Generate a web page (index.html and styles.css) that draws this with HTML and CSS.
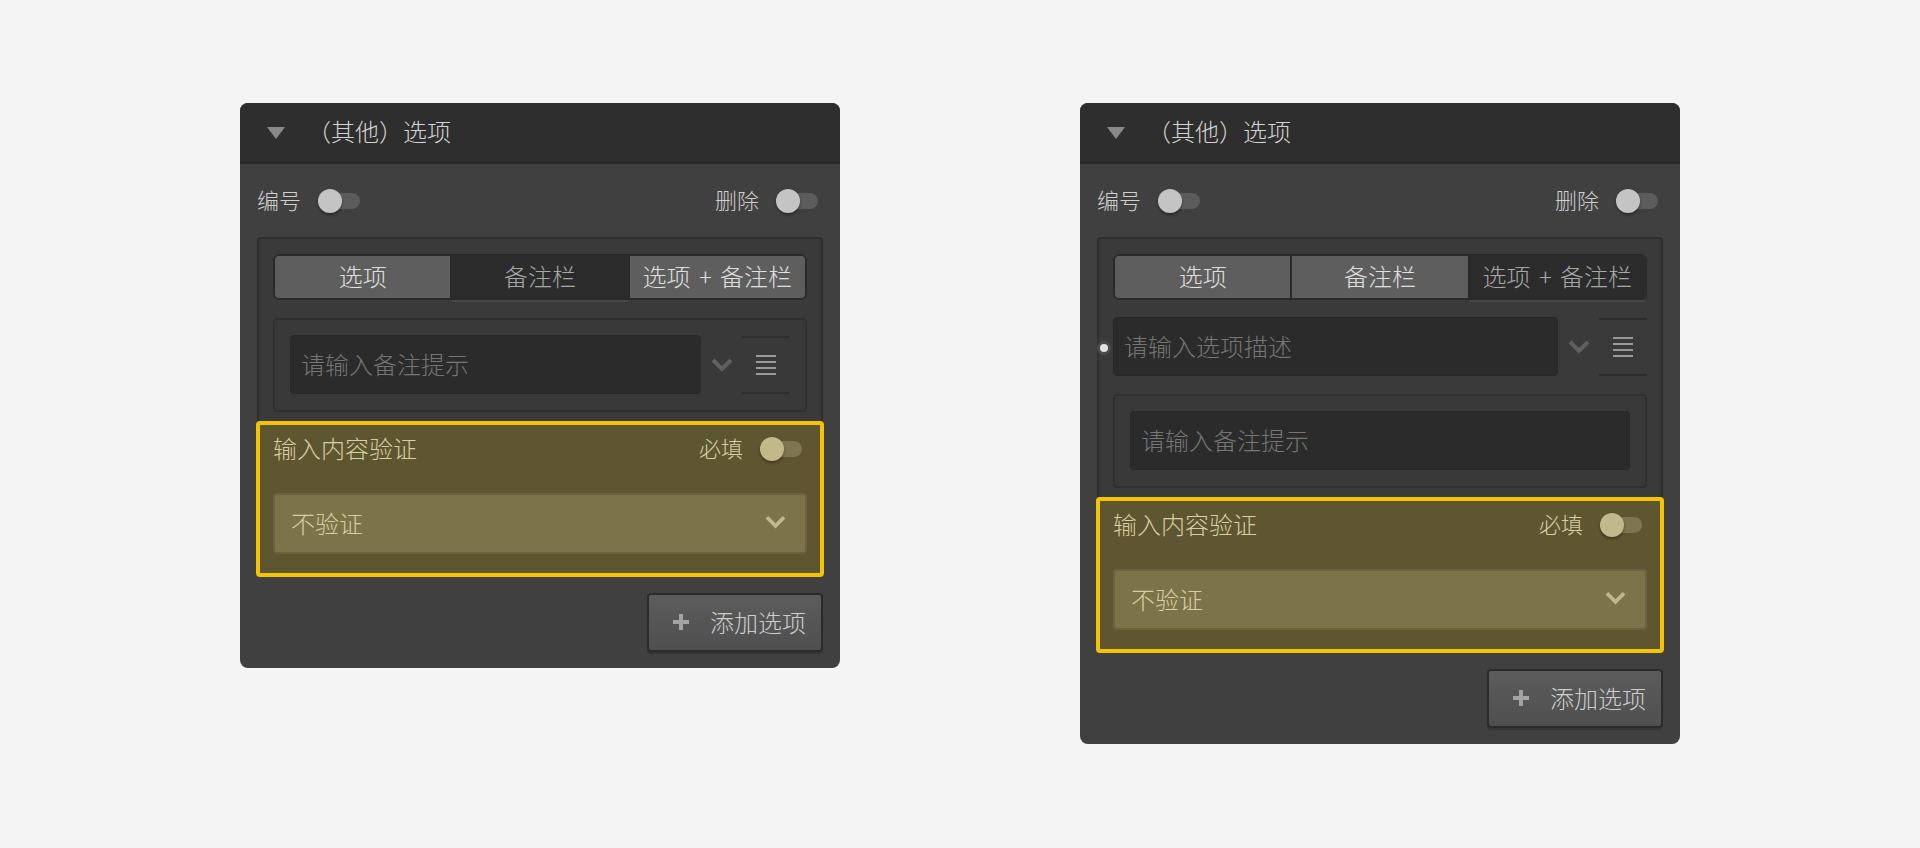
FILE: index.html
```html
<!DOCTYPE html>
<html lang="zh-CN">
<head>
  <meta charset="UTF-8" />
  <meta name="viewport" content="width=device-width, initial-scale=1" />
  <title>（其他）选项</title>
  <link rel="stylesheet" href="styles.css">
</head>
<body>

<div class="page">

  <!-- panel 1: 备注栏 mode -->
  <div class="panel">
    <div class="panel-head">
      <span class="caret"></span>
      <span class="panel-title">（其他）选项</span>
    </div>
    <div class="panel-body">
      <div class="switch-row">
        <label class="switch-label"><span class="label-text">编号</span><span class="toggle"><span class="knob"></span></span></label>
        <label class="switch-label"><span class="label-text">删除</span><span class="toggle"><span class="knob"></span></span></label>
      </div>

      <div class="section">
        <div class="segmented">
          <div class="seg on">选项</div>
          <div class="seg off">备注栏</div>
          <div class="seg on">选项 + 备注栏</div>
        </div>

        <div class="sub-box">
          <div class="field-row">
            <input class="field" placeholder="请输入备注提示" />
            <svg class="chevron" width="22" height="14" viewBox="0 0 22 14"><path d="M2 2 L11 11 L20 2" fill="none" stroke="#606060" stroke-width="4"/></svg>
            <div class="menu-box">
              <span class="menu-icon"><i></i><i></i><i></i><i></i></span>
            </div>
          </div>
        </div>

        <div class="validate">
          <div class="validate-head">
            <span class="validate-title">输入内容验证</span>
            <label class="switch-label required"><span class="label-text">必填</span><span class="toggle"><span class="knob"></span></span></label>
          </div>
          <div class="select">
            <span>不验证</span>
            <svg class="chevron" width="21" height="14" viewBox="0 0 22 14"><path d="M2 2 L11 11 L20 2" fill="none" stroke="#c0b78b" stroke-width="4"/></svg>
          </div>
        </div>
      </div>

      <div class="actions">
        <button class="add-btn">
          <svg width="16" height="16" viewBox="0 0 16 16"><path d="M8 0 V16 M0 8 H16" stroke="#a3a3a3" stroke-width="4"/></svg>
          <span>添加选项</span>
        </button>
      </div>
    </div>
  </div>

  <!-- panel 2: 选项 + 备注栏 mode -->
  <div class="panel">
    <div class="panel-head">
      <span class="caret"></span>
      <span class="panel-title">（其他）选项</span>
    </div>
    <div class="panel-body">
      <div class="switch-row">
        <label class="switch-label"><span class="label-text">编号</span><span class="toggle"><span class="knob"></span></span></label>
        <label class="switch-label"><span class="label-text">删除</span><span class="toggle"><span class="knob"></span></span></label>
      </div>

      <div class="section">
        <div class="segmented">
          <div class="seg on">选项</div>
          <div class="seg on">备注栏</div>
          <div class="seg off">选项 + 备注栏</div>
        </div>

        <div class="field-row top-row">
          <span class="dot"></span>
          <input class="field" placeholder="请输入选项描述" />
          <svg class="chevron" width="22" height="14" viewBox="0 0 22 14"><path d="M2 2 L11 11 L20 2" fill="none" stroke="#606060" stroke-width="4"/></svg>
          <div class="menu-box">
            <span class="menu-icon"><i></i><i></i><i></i><i></i></span>
          </div>
        </div>

        <div class="sub-box">
          <input class="field" placeholder="请输入备注提示" />
        </div>

        <div class="validate">
          <div class="validate-head">
            <span class="validate-title">输入内容验证</span>
            <label class="switch-label required"><span class="label-text">必填</span><span class="toggle"><span class="knob"></span></span></label>
          </div>
          <div class="select">
            <span>不验证</span>
            <svg class="chevron" width="21" height="14" viewBox="0 0 22 14"><path d="M2 2 L11 11 L20 2" fill="none" stroke="#c0b78b" stroke-width="4"/></svg>
          </div>
        </div>
      </div>

      <div class="actions">
        <button class="add-btn">
          <svg width="16" height="16" viewBox="0 0 16 16"><path d="M8 0 V16 M0 8 H16" stroke="#a3a3a3" stroke-width="4"/></svg>
          <span>添加选项</span>
        </button>
      </div>
    </div>
  </div>

</div>

</body>
</html>
```

FILE: styles.css
```css
* {
  box-sizing: border-box;
}

body {
  margin: 0;
  background: #f4f4f4;
  font-family: "Noto Sans CJK SC", "Noto Sans", sans-serif;
  font-weight: 300;
  color: #d0d0d0;
}

.page {
  display: flex;
  align-items: flex-start;
  gap: 240px;
  padding: 103px 0 0 240px;
}

.panel {
  width: 600px;
  background: #404040;
  border-radius: 8px;
}

.panel-head {
  display: flex;
  align-items: center;
  height: 61px;
  padding-left: 27px;
  background: #2e2e2e;
  border-bottom: 2px solid #262626;
  border-radius: 8px 8px 0 0;
}

.caret {
  width: 0;
  height: 0;
  border-left: 9.5px solid transparent;
  border-right: 9.5px solid transparent;
  border-top: 12px solid #8a8a8a;
  margin-right: 22px;
}

.panel-title {
  font-size: 24px;
  line-height: 30px;
  padding-bottom: 4px;
  color: #d4d4d4;
}

.panel-body {
  padding: 0 17px 16px;
}

.switch-row {
  display: flex;
  justify-content: space-between;
  align-items: center;
  height: 73px;
}

.switch-label {
  display: flex;
  align-items: center;
  font-size: 22px;
  line-height: 28px;
  color: #cfcfcf;
}

.label-text {
  padding-bottom: 4px;
}

.toggle {
  position: relative;
  display: inline-block;
  width: 42px;
  height: 16px;
  margin: 0 5px 0 17px;
  background: #5c5c5c;
  border-radius: 8px;
}

.knob {
  position: absolute;
  left: 0;
  top: -4px;
  width: 24px;
  height: 24px;
  border-radius: 50%;
  background: #c4c4c4;
  box-shadow: 0 2px 3px rgba(0, 0, 0, 0.35);
}

/* outer box */
.section {
  background: #3a3a3a;
  border: 2px solid #2f2f2f;
  border-radius: 4px;
  padding: 15px 14px 0;
}

.segmented {
  display: grid;
  grid-template-columns: 1fr 1fr 1fr;
  gap: 2px;
  height: 46px;
  background: #2a2a2a;
  border: 2px solid #2a2a2a;
  border-radius: 6px;
}

.seg {
  position: relative;
  display: flex;
  align-items: center;
  justify-content: center;
  padding-bottom: 4px;
  font-size: 24px;
  word-spacing: 3px;
  white-space: nowrap;
}

.seg.on {
  background: #5e5e5e;
  color: #e0e0e0;
}

.seg.on:first-child {
  border-radius: 4px 0 0 4px;
}

.seg.on:last-child {
  border-radius: 0 4px 4px 0;
}

.seg.off {
  background: #2c2c2c;
  color: #a8a8a8;
}

.seg.off::after {
  content: "";
  position: absolute;
  left: 0;
  right: 0;
  bottom: -4px;
  height: 2px;
  background: #474747;
}

.sub-box {
  margin-top: 18px;
  background: #393939;
  border: 2px solid #2f2f2f;
  border-radius: 4px;
  padding: 15px 15px 16px;
}

.field-row {
  position: relative;
  display: flex;
  align-items: center;
}

.top-row {
  margin-top: 17px;
}

.field {
  flex: 1;
  display: block;
  width: 100%;
  height: 59px;
  padding: 0 10px 3px;
  background: #2b2b2b;
  border: 1px solid #282828;
  border-radius: 4px;
  font-family: inherit;
  font-weight: 300;
  font-size: 24px;
  color: #d0d0d0;
  outline: none;
}

.field::placeholder {
  color: #767676;
}

.field-row .chevron {
  flex: none;
  margin-left: 10px;
}

.menu-box {
  flex: none;
  display: flex;
  align-items: center;
  justify-content: center;
  width: 48px;
  height: 58px;
  margin-left: 9px;
  border-top: 2px solid #2d2d2d;
  border-bottom: 2px solid #2d2d2d;
}

.menu-icon {
  display: flex;
  flex-direction: column;
  gap: 4px;
}

.menu-icon i {
  display: block;
  width: 20px;
  height: 2px;
  background: #9a9a9a;
}

.dot {
  position: absolute;
  left: -16px;
  top: 50%;
  width: 14px;
  height: 14px;
  margin-top: -6px;
  border-radius: 50%;
  background: #e2e2e2;
  border: 3px solid #4b4b4b;
}

/* highlighted validation block */
.validate {
  margin: 9px -17px -2px;
  padding: 0 13px 19px;
  background: #5e5630;
  border: 4px solid #f5c400;
  border-radius: 4px;
}

.validate-head {
  display: flex;
  justify-content: space-between;
  align-items: center;
  height: 48px;
  margin-bottom: 20px;
}

.validate-title {
  font-size: 24px;
  padding-bottom: 4px;
  color: #d7cfa6;
}

.switch-label.required {
  color: #d7cfa6;
}

.required .toggle {
  background: #7e7651;
}

.required .knob {
  background: #c1b88c;
}

.select {
  display: flex;
  justify-content: space-between;
  align-items: center;
  height: 61px;
  padding: 0 19px 3px 16px;
  background: #7c7449;
  border: 2px solid #6a6240;
  border-radius: 4px;
  font-size: 24px;
  color: #d6cea5;
}

.actions {
  display: flex;
  justify-content: flex-end;
  margin-top: 16px;
}

.add-btn {
  display: flex;
  align-items: center;
  gap: 21px;
  height: 59px;
  padding: 0 15px 2px 24px;
  background: linear-gradient(#5c5c5c, #4f4f4f);
  border: 2px solid #2b2b2b;
  border-radius: 4px;
  box-shadow: 0 2px 0 #353535;
  font-family: inherit;
  font-weight: 300;
  font-size: 24px;
  color: #cdcdcd;
  cursor: pointer;
}
```
